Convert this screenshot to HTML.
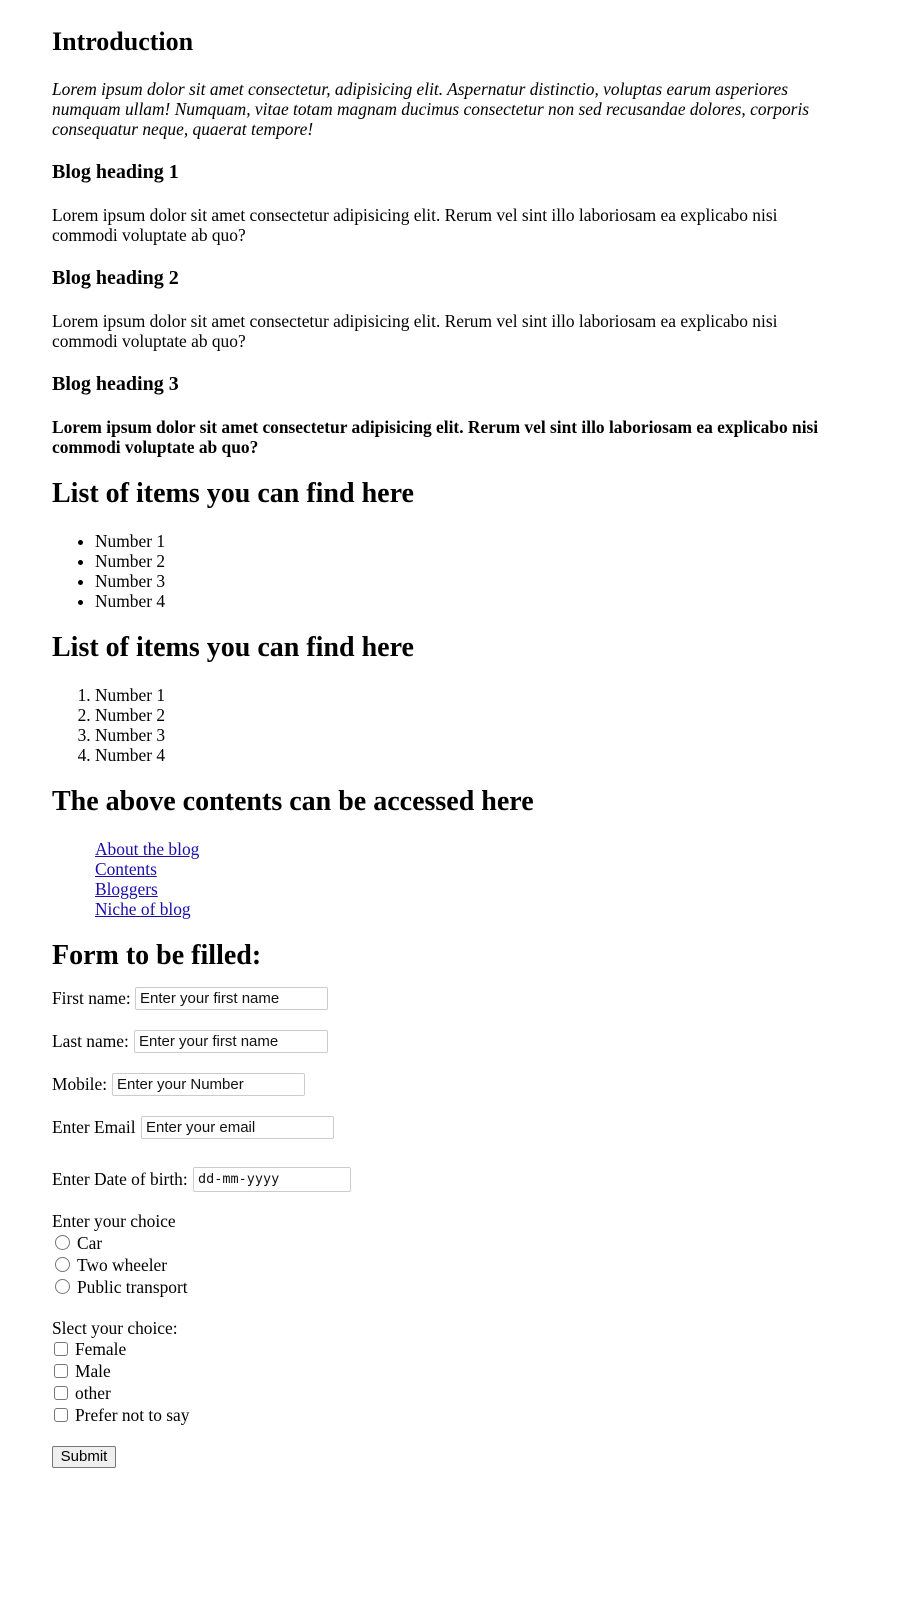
<!DOCTYPE html>
<html><head><meta charset="utf-8"><style>
body{margin:0;padding:6px 80px 0 52px;font-family:"Liberation Serif",serif;font-size:17.4px;line-height:20px;color:#000;background:#fff;position:relative;height:1617px;overflow:hidden}
h2.i{font-size:26px;line-height:30px;margin:21px 0 22px}
h3{font-size:20px;line-height:24px;margin:21px 0 20px}
h1{font-size:28px;line-height:32px;margin:21px 0}
p{margin:21px 0}
ul,ol{padding-left:43px;margin:21px 0}
ul.links{list-style:none}
a{color:#1a0dab}
.f{position:absolute;left:52px;line-height:22px;white-space:nowrap}
.in{position:absolute;font-family:"Liberation Sans",sans-serif;font-size:15px;border:1px solid #ccc;border-radius:2px;box-sizing:border-box;height:23px;line-height:21px;padding:0 4px;color:#111}
.rd{display:inline-block;width:13px;height:13px;border:1px solid #777;border-radius:50%;margin:0 7px 0 3px;vertical-align:-1px}
.cb{display:inline-block;width:12px;height:12px;border:1px solid #777;border-radius:3px;margin:0 7px 0 2px;vertical-align:-1px}
.btn{position:absolute;left:52px;top:1446px;width:64px;height:22px;box-sizing:border-box;border:1px solid #767676;border-radius:2px;background:#efefef;font-family:"Liberation Sans",sans-serif;font-size:15px;line-height:20px;text-align:center}
</style></head><body>
<h2 class="i">Introduction</h2>
<p><i>Lorem ipsum dolor sit amet consectetur, adipisicing elit. Aspernatur distinctio, voluptas earum asperiores numquam ullam! Numquam, vitae totam magnam ducimus consectetur non sed recusandae dolores, corporis consequatur neque, quaerat tempore!</i></p>
<h3>Blog heading 1</h3>
<p>Lorem ipsum dolor sit amet consectetur adipisicing elit. Rerum vel sint illo laboriosam ea explicabo nisi commodi voluptate ab quo?</p>
<h3>Blog heading 2</h3>
<p>Lorem ipsum dolor sit amet consectetur adipisicing elit. Rerum vel sint illo laboriosam ea explicabo nisi commodi voluptate ab quo?</p>
<h3>Blog heading 3</h3>
<p><b>Lorem ipsum dolor sit amet consectetur adipisicing elit. Rerum vel sint illo laboriosam ea explicabo nisi commodi voluptate ab quo?</b></p>
<h1>List of items you can find here</h1>
<ul><li>Number 1</li><li>Number 2</li><li>Number 3</li><li>Number 4</li></ul>
<h1>List of items you can find here</h1>
<ol><li>Number 1</li><li>Number 2</li><li>Number 3</li><li>Number 4</li></ol>
<h1>The above contents can be accessed here</h1>
<ul class="links"><li><a href="#">About the blog</a></li><li><a href="#">Contents</a></li><li><a href="#">Bloggers</a></li><li><a href="#">Niche of blog</a></li></ul>
<h1 style="margin-top:19px">Form to be filled:</h1>

<div class="f" style="top:987px">First name:</div><div class="in" style="left:135px;top:987px;width:193px">Enter your first name</div>
<div class="f" style="top:1030px">Last name:</div><div class="in" style="left:134px;top:1030px;width:194px">Enter your first name</div>
<div class="f" style="top:1073px">Mobile:</div><div class="in" style="left:112px;top:1073px;width:193px">Enter your Number</div>
<div class="f" style="top:1116px">Enter Email</div><div class="in" style="left:141px;top:1116px;width:193px">Enter your email</div>
<div class="f" style="top:1168px">Enter Date of birth:</div><div class="in" style="left:193px;top:1167px;width:158px;height:25px;line-height:23px;font-family:'DejaVu Sans Mono',monospace;font-size:13.5px">dd-mm-yyyy</div>
<div class="f" style="top:1210px">Enter your choice</div>
<div class="f" style="top:1232px"><span class="rd"></span>Car</div>
<div class="f" style="top:1254px"><span class="rd"></span>Two wheeler</div>
<div class="f" style="top:1276px"><span class="rd"></span>Public transport</div>
<div class="f" style="top:1317px">Slect your choice:</div>
<div class="f" style="top:1338px"><span class="cb"></span>Female</div>
<div class="f" style="top:1360px"><span class="cb"></span>Male</div>
<div class="f" style="top:1382px"><span class="cb"></span>other</div>
<div class="f" style="top:1404px"><span class="cb"></span>Prefer not to say</div>
<div class="btn">Submit</div>
</body></html>
